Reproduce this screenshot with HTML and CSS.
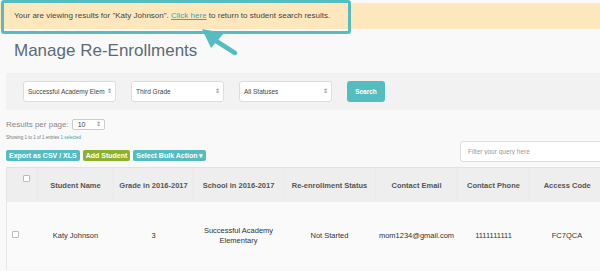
FILE: index.html
```html
<!DOCTYPE html>
<html lang="en">
<head>
  <meta charset="UTF-8">
  <title>Manage Re-Enrollments</title>
  <link rel="stylesheet" href="styles.css">
</head>
<body>

<div class="notice">
  Your are viewing results for "Katy Johnson". <a href="#">Click here</a> to return to student search results.
</div>

<!-- callout drawn over the notice -->
<div class="callout"></div>
<svg class="arrow" width="40" height="30" viewBox="0 0 40 30">
  <line x1="12" y1="10" x2="34" y2="24" stroke="#55bcc2" stroke-width="4.5" stroke-linecap="round"/>
  <polygon points="1,0 23,4 10,19" fill="#55bcc2"/>
</svg>

<h1 class="title">Manage Re-Enrollments</h1>

<div class="filters">
  <div class="select wide">Successful Academy Elem<span class="caret">&#8661;</span></div>
  <div class="select">Third Grade<span class="caret">&#8661;</span></div>
  <div class="select">All Statuses<span class="caret">&#8661;</span></div>
  <button class="btn search">Search</button>
</div>

<div class="toolbar">
  <div class="toolbar-left">
    <div class="per-page">
      Results per page:
      <span class="select small">10<span class="caret">&#8661;</span></span>
    </div>
    <div class="showing">Showing 1 to 1 of 1 entries <span class="selected">1 selected</span></div>
    <div class="actions">
      <button class="btn teal">Export as CSV / XLS</button>
      <button class="btn green">Add Student</button>
      <button class="btn teal">Select Bulk Action &#9662;</button>
    </div>
  </div>
  <input class="query" type="text" placeholder="Filter your query here">
</div>

<table class="grid">
  <colgroup>
    <col style="width:31px">
    <col style="width:76px">
    <col style="width:80px">
    <col style="width:90px">
    <col style="width:92px">
    <col style="width:82px">
    <col style="width:72px">
    <col style="width:75px">
  </colgroup>
  <thead>
    <tr>
      <th class="check-col"><span class="check head-check"></span></th>
      <th>Student Name</th>
      <th>Grade in 2016-2017</th>
      <th>School in 2016-2017</th>
      <th>Re-enrollment Status</th>
      <th>Contact Email</th>
      <th>Contact Phone</th>
      <th>Access Code</th>
    </tr>
  </thead>
  <tbody>
    <tr>
      <td class="check-col"><span class="check row-check"></span></td>
      <td>Katy Johnson</td>
      <td>3</td>
      <td>Successful Academy<br>Elementary</td>
      <td>Not Started</td>
      <td>mom1234@gmail.com</td>
      <td>1111111111</td>
      <td>FC7QCA</td>
    </tr>
  </tbody>
</table>

</body>
</html>
```

FILE: styles.css
```css
body {
  margin: 0;
  background-color: #f9f9f9;
  font-family: "Liberation Sans", Arial, sans-serif;
  color: #333;
  width: 620px;
  overflow: hidden;
}

.notice {
  margin-top: 3px;
  height: 26px;
  line-height: 26px;
  padding-left: 14px;
  background-color: #fde8bd;
  font-size: 8px;
  color: #444;
  white-space: nowrap;
}

.notice a {
  color: #3aa6b2;
}

.callout {
  position: absolute;
  left: 1px;
  top: 0;
  width: 344px;
  height: 28px;
  border: 3px solid #55bcc2;
  border-radius: 3px;
}

.arrow {
  position: absolute;
  left: 201px;
  top: 29px;
}

.title {
  margin: 12px 0 0 14px;
  font-size: 17px;
  line-height: 20px;
  font-weight: normal;
  color: #5d6a76;
}

.filters {
  display: flex;
  align-items: center;
  gap: 15px;
  margin: 12px 0 0 6px;
  padding: 8px 0 8px 17px;
  background-color: #f2f2f2;
}

.select {
  position: relative;
  box-sizing: border-box;
  width: 93px;
  height: 21px;
  line-height: 19px;
  padding-left: 4px;
  background-color: #fff;
  border: 1px solid #ddd;
  border-radius: 3px;
  font-size: 6.5px;
  color: #444;
  white-space: nowrap;
  overflow: hidden;
}

.caret {
  position: absolute;
  right: 3px;
  top: 0;
  font-size: 6px;
  color: #777;
  background-color: #fff;
  padding-left: 1px;
}

.btn {
  border: none;
  border-radius: 2px;
  color: #fff;
  font-family: "Liberation Sans", Arial, sans-serif;
  font-weight: bold;
  cursor: pointer;
}

.search {
  width: 38px;
  height: 21px;
  font-size: 6.5px;
  background-color: #55bcc0;
  border-radius: 3px;
}

.toolbar {
  display: flex;
  justify-content: space-between;
  margin: 9px 0 0 6px;
  padding-bottom: 6px;
  border-bottom: 1px solid #e2e2e2;
}

.per-page {
  display: flex;
  align-items: center;
  gap: 3px;
  font-size: 8px;
  color: #888;
  height: 11px;
}

.select.small {
  display: inline-block;
  width: 33px;
  height: 11px;
  line-height: 9px;
  font-size: 7px;
  border-color: #ccc;
  border-radius: 2px;
  padding-left: 5px;
}

.showing {
  margin-top: 3px;
  font-size: 4.5px;
  line-height: 10px;
  color: #777;
}

.selected {
  color: #3aa6b2;
}

.actions {
  display: flex;
  gap: 3px;
  margin-top: 7px;
}

.actions .btn {
  height: 11px;
  padding: 0 3px;
  font-size: 7px;
  line-height: 11px;
}

.teal {
  background-color: #55bcc2;
}

.green {
  background-color: #8cb12d;
}

.query {
  align-self: flex-end;
  box-sizing: border-box;
  width: 160px;
  height: 21px;
  margin-bottom: -1px;
  padding-left: 7px;
  background-color: #fff;
  border: 1px solid #ddd;
  border-radius: 3px;
  font-size: 6.5px;
  font-family: "Liberation Sans", Arial, sans-serif;
}

.query::placeholder {
  color: #999;
}

.grid {
  margin-left: 6px;
  border-collapse: collapse;
  table-layout: fixed;
  width: 598px;
  border-left: 1px solid #e6e6e6;
}

.grid th {
  height: 34px;
  padding: 0;
  background-color: #eeeeee;
  font-size: 7.5px;
  font-weight: bold;
  color: #555;
  text-align: center;
  vertical-align: middle;
  border-left: 1px solid #eaeaea;
}

.grid th.check-col {
  border-left: none;
  vertical-align: top;
}

.grid td {
  height: 68px;
  padding: 0;
  background-color: #fafafa;
  font-size: 7.5px;
  line-height: 10px;
  color: #333;
  text-align: center;
  vertical-align: middle;
}

.check {
  display: inline-block;
  width: 5px;
  height: 5px;
  border: 1px solid #bbb;
  border-radius: 1px;
  background-color: #fff;
}

.head-check {
  margin: 7px 0 0 9px;
}

.row-check {
  margin-right: 13px;
}
```
